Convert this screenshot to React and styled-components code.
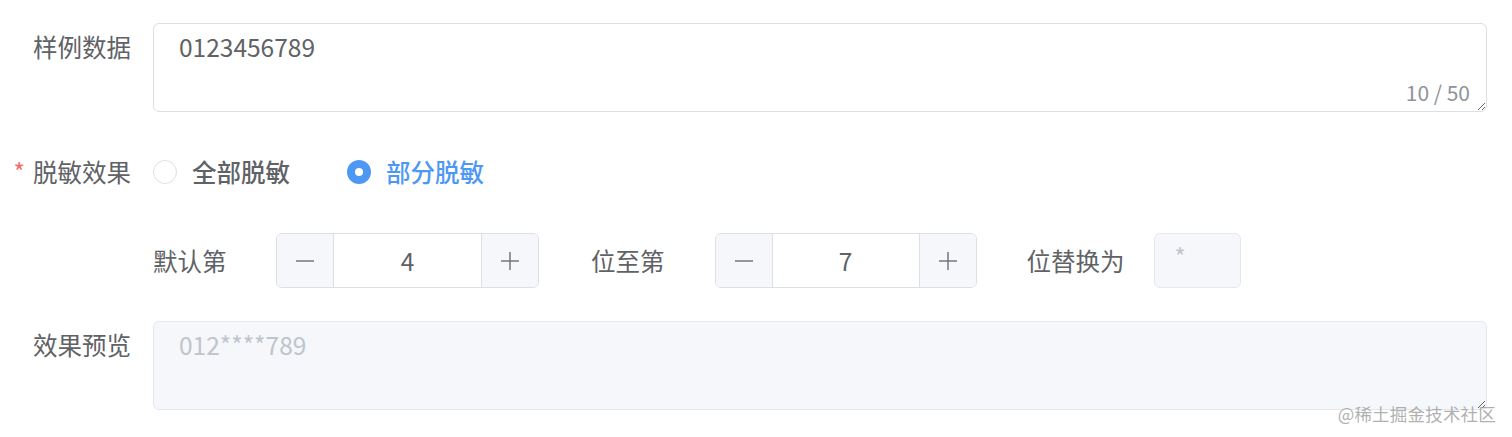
import React from "react";
import styled, { createGlobalStyle } from "styled-components";

const Global = createGlobalStyle`
  html, body { margin: 0; padding: 0; background: #fff; }
  body { font-family: "Noto Sans CJK SC", "Noto Sans", sans-serif; }
  * { box-sizing: border-box; }
`;

const Page = styled.div`
  position: relative;
  width: 1512px;
  height: 437px;
  overflow: hidden;
  padding-top: 23px;
  padding-right: 25px;
  color: #606266;
  font-size: 24.5px;
`;

const FormItem = styled.div`
  display: flex;
  align-items: flex-start;
  margin-top: ${(p) => p.$gap || 0}px;
`;

const Label = styled.label`
  flex: 0 0 153px;
  padding-right: 22px;
  text-align: right;
  line-height: ${(p) => p.$lh || 47}px;
  color: #606266;
  white-space: nowrap;
`;

const Star = styled.span`
  color: #f56c6c;
  margin-right: 8px;
`;

const Content = styled.div`
  flex: 1;
  position: relative;
  display: flex;
  align-items: center;
  min-height: ${(p) => p.$h || 47}px;
`;

const TextArea = styled.textarea`
  display: block;
  width: 100%;
  height: 89px;
  padding: 4px 25px;
  font: inherit;
  font-size: 24.5px;
  line-height: 37px;
  color: ${(p) => (p.$disabled ? "#c0c4cc" : "#606266")};
  background: ${(p) => (p.$disabled ? "#f5f7fa" : "#fff")};
  border: 1.5px solid ${(p) => (p.$disabled ? "#e4e7ed" : "#dcdfe6")};
  border-radius: 6px;
  resize: vertical;
  outline: none;
`;

const Count = styled.span`
  position: absolute;
  right: 17px;
  bottom: 9px;
  font-size: 21px;
  line-height: 1;
  color: #909399;
  background: #fff;
`;

const RadioGroup = styled.div`
  display: flex;
  align-items: center;
  height: 47px;
`;

const Radio = styled.label`
  display: flex;
  align-items: center;
  margin-right: ${(p) => p.$mr || 0}px;
  font-weight: 500;
  color: ${(p) => (p.$checked ? "#4e98f5" : "#606266")};
  cursor: pointer;
`;

const Circle = styled.span`
  width: 24px;
  height: 24px;
  border-radius: 50%;
  margin-right: 15px;
  border: ${(p) => (p.$checked ? "none" : "1.5px solid #dcdfe6")};
  background: ${(p) => (p.$checked ? "#4e98f5" : "#fff")};
  display: flex;
  align-items: center;
  justify-content: center;
  &::after {
    content: "";
    display: ${(p) => (p.$checked ? "block" : "none")};
    width: 8px;
    height: 8px;
    border-radius: 50%;
    background: #fff;
  }
`;

const InlineLabel = styled.span`
  line-height: 55px;
  margin-right: ${(p) => p.$mr}px;
  white-space: nowrap;
`;

const Row = styled.div`
  display: flex;
  align-items: center;
  height: 55px;
  margin-left: 153px;
`;

const NumberBox = styled.div`
  display: flex;
  flex: 0 0 ${(p) => p.$w}px;
  height: 55px;
  border: 1.5px solid #dcdfe6;
  border-radius: 6px;
  overflow: hidden;
  margin-right: ${(p) => p.$mr}px;
`;

const StepBtn = styled.span`
  flex: 0 0 57px;
  display: flex;
  align-items: center;
  justify-content: center;
  background: #f5f7fa;
  color: #606266;
  border-${(p) => (p.$side === "left" ? "right" : "left")}: 1.5px solid #dcdfe6;
`;

const NumValue = styled.span`
  flex: 1;
  display: flex;
  align-items: center;
  justify-content: center;
  color: #606266;
`;

const SmallInput = styled.div`
  flex: 0 0 87px;
  height: 55px;
  border: 1.5px solid #e4e7ed;
  border-radius: 6px;
  background: #f5f7fa;
  color: #c0c4cc;
  padding: 6px 0 0 20px;
  font-size: 24px;
  line-height: 32px;
`;

const Watermark = styled.div`
  position: absolute;
  right: 16px;
  bottom: 15px;
  font-size: 17.5px;
  line-height: 1;
  color: rgba(150, 150, 150, 0.75);
  letter-spacing: 0.2px;
  pointer-events: none;
`;

const Minus = () => (
  <svg width="20" height="20" viewBox="0 0 20 20">
    <line x1="1" y1="10" x2="19" y2="10" stroke="#6a6d73" strokeWidth="1.4" />
  </svg>
);

const Plus = () => (
  <svg width="20" height="20" viewBox="0 0 20 20">
    <line x1="1" y1="10" x2="19" y2="10" stroke="#6a6d73" strokeWidth="1.4" />
    <line x1="10" y1="1" x2="10" y2="19" stroke="#6a6d73" strokeWidth="1.4" />
  </svg>
);

const InputNumber = ({ value, width, mr }) => (
  <NumberBox $w={width} $mr={mr}>
    <StepBtn $side="left">
      <Minus />
    </StepBtn>
    <NumValue>{value}</NumValue>
    <StepBtn $side="right">
      <Plus />
    </StepBtn>
  </NumberBox>
);

export default function App() {
  return (
    <Page>
      <Global />
      <FormItem>
        <Label>样例数据</Label>
        <Content $h={89}>
          <TextArea readOnly value="0123456789" />
          <Count>10 / 50</Count>
        </Content>
      </FormItem>

      <FormItem $gap={36}>
        <Label>
          <Star>*</Star>脱敏效果
        </Label>
        <Content>
          <RadioGroup>
            <Radio $mr={57}>
              <Circle />
              全部脱敏
            </Radio>
            <Radio $checked>
              <Circle $checked />
              部分脱敏
            </Radio>
          </RadioGroup>
        </Content>
      </FormItem>

      <FormItem $gap={38}>
        <Row>
          <InlineLabel $mr={49.5}>默认第</InlineLabel>
          <InputNumber value="4" width={263} mr={52} />
          <InlineLabel $mr={50}>位至第</InlineLabel>
          <InputNumber value="7" width={262} mr={50} />
          <InlineLabel $mr={29}>位替换为</InlineLabel>
          <SmallInput>*</SmallInput>
        </Row>
      </FormItem>

      <FormItem $gap={33}>
        <Label>效果预览</Label>
        <Content $h={89}>
          <TextArea $disabled readOnly value="012****789" />
        </Content>
      </FormItem>

      <Watermark>@稀土掘金技术社区</Watermark>
    </Page>
  );
}
